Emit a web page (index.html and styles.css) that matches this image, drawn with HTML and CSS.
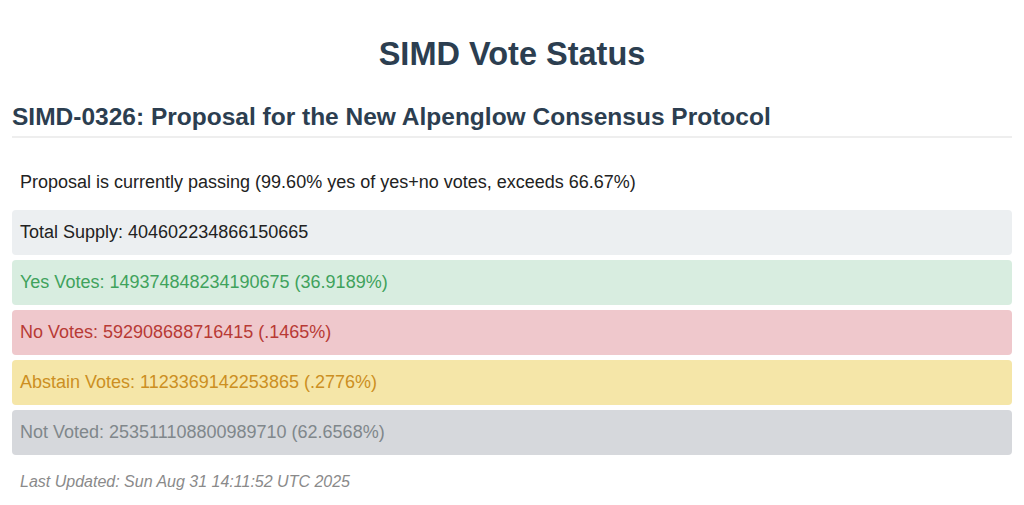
FILE: index.html
```html
<!DOCTYPE html>
<html lang="en">
<head>
<meta charset="utf-8">
<title>SIMD Vote Status</title>
<link rel="stylesheet" href="styles.css">
</head>
<body>
<div class="container">
  <h1 class="title">SIMD Vote Status</h1>
  <h2 class="proposal">SIMD-0326: Proposal for the New Alpenglow Consensus Protocol</h2>
  <div class="result">Proposal is currently passing (99.60% yes of yes+no votes, exceeds 66.67%)</div>
  <div class="row total">Total Supply: 404602234866150665</div>
  <div class="row yes">Yes Votes: 149374848234190675 (36.9189%)</div>
  <div class="row no">No Votes: 592908688716415 (.1465%)</div>
  <div class="row abstain">Abstain Votes: 1123369142253865 (.2776%)</div>
  <div class="row notvoted">Not Voted: 253511108800989710 (62.6568%)</div>
  <div class="updated">Last Updated: Sun Aug 31 14:11:52 UTC 2025</div>
</div>
</body>
</html>
```
FILE: styles.css
```css
html, body {
  margin: 0;
  padding: 0;
  background: #ffffff;
}
body {
  font-family: "Liberation Sans", Arial, sans-serif;
  font-size: 18px;
  color: #222222;
}
.container {
  max-width: 1000px;
  margin: 0 auto;
  padding-top: 16px;
}
.title {
  margin: 20px 0 31px;
  font-size: 32.5px;
  font-weight: bold;
  text-align: center;
  color: #2c3e50;
  line-height: 36px;
}
.proposal {
  margin: 0 0 20px;
  padding-bottom: 5px;
  font-size: 24.5px;
  font-weight: bold;
  color: #2c3e50;
  line-height: 28px;
  border-bottom: 2px solid #eeeeee;
}
.result {
  padding: 12px 8px 10px;
  line-height: 24px;
  color: #222222;
  margin-bottom: 6px;
}
.row {
  padding: 10px 8px;
  line-height: 25px;
  border-radius: 4px;
  margin-bottom: 5px;
}
.total { background: #eceff1; color: #222222; }
.yes { background: #d8ede0; color: #3fa25c; }
.no { background: #efc8cc; color: #b83a35; }
.abstain { background: #f5e6a8; color: #cc8f22; }
.notvoted { background: #d6d8dc; color: #80878b; }
.updated {
  padding: 12px 8px;
  font-size: 16px;
  font-style: italic;
  color: #8a8a8a;
  line-height: 20px;
}
```
